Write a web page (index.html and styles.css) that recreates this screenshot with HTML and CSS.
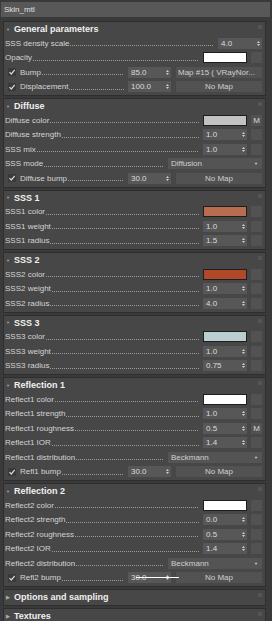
FILE: index.html
```html
<!DOCTYPE html>
<html lang="en">
<head>
    <meta charset="UTF-8">
    <title>Skin_mtl</title>
    <link rel="stylesheet" href="styles.css">
</head>
<body>
    <div class="name-bar">Skin_mtl</div>

    <section class="rollout">
        <div class="head"><span class="arrow">&#9660;</span>General parameters<span class="grip"></span></div>
        <div class="row">
            <span class="label">SSS density scale</span><span class="dots"></span>
            <span class="spin"><span>4.0</span><span class="updn"></span></span>
        </div>
        <div class="row">
            <span class="label">Opacity</span><span class="dots"></span>
            <span class="swatch" style="background:#ffffff"></span><span class="sq"></span>
        </div>
        <div class="row">
            <span class="check"></span><span class="label">Bump</span><span class="dots"></span>
            <span class="spin short"><span>85.0</span><span class="updn"></span></span>
            <span class="mapbtn left">Map #15 ( VRayNor...</span>
        </div>
        <div class="row">
            <span class="check"></span><span class="label">Displacement</span><span class="dots"></span>
            <span class="spin short"><span>100.0</span><span class="updn"></span></span>
            <span class="mapbtn">No Map</span>
        </div>
    </section>

    <section class="rollout">
        <div class="head"><span class="arrow">&#9660;</span>Diffuse<span class="grip"></span></div>
        <div class="row">
            <span class="label">Diffuse color</span><span class="dots"></span>
            <span class="swatch" style="background:#c2c2c2"></span><span class="sq">M</span>
        </div>
        <div class="row">
            <span class="label">Diffuse strength</span><span class="dots"></span>
            <span class="spin"><span>1.0</span><span class="updn"></span></span><span class="sq"></span>
        </div>
        <div class="row">
            <span class="label">SSS mix</span><span class="dots"></span>
            <span class="spin"><span>1.0</span><span class="updn"></span></span><span class="sq"></span>
        </div>
        <div class="row">
            <span class="label">SSS mode</span><span class="dots"></span>
            <span class="combo"><span>Diffusion</span><span class="drop">&#9660;</span></span>
        </div>
        <div class="row">
            <span class="check"></span><span class="label">Diffuse bump</span><span class="dots"></span>
            <span class="spin short"><span>30.0</span><span class="updn"></span></span>
            <span class="mapbtn">No Map</span>
        </div>
    </section>

    <section class="rollout">
        <div class="head"><span class="arrow">&#9660;</span>SSS 1<span class="grip"></span></div>
        <div class="row">
            <span class="label">SSS1 color</span><span class="dots"></span>
            <span class="swatch" style="background:#b86c50"></span><span class="sq"></span>
        </div>
        <div class="row">
            <span class="label">SSS1 weight</span><span class="dots"></span>
            <span class="spin"><span>1.0</span><span class="updn"></span></span><span class="sq"></span>
        </div>
        <div class="row">
            <span class="label">SSS1 radius</span><span class="dots"></span>
            <span class="spin"><span>1.5</span><span class="updn"></span></span><span class="sq"></span>
        </div>
    </section>

    <section class="rollout">
        <div class="head"><span class="arrow">&#9660;</span>SSS 2<span class="grip"></span></div>
        <div class="row">
            <span class="label">SSS2 color</span><span class="dots"></span>
            <span class="swatch" style="background:#b0482a"></span><span class="sq"></span>
        </div>
        <div class="row">
            <span class="label">SSS2 weight</span><span class="dots"></span>
            <span class="spin"><span>1.0</span><span class="updn"></span></span><span class="sq"></span>
        </div>
        <div class="row">
            <span class="label">SSS2 radius</span><span class="dots"></span>
            <span class="spin"><span>4.0</span><span class="updn"></span></span><span class="sq"></span>
        </div>
    </section>

    <section class="rollout">
        <div class="head"><span class="arrow">&#9660;</span>SSS 3<span class="grip"></span></div>
        <div class="row">
            <span class="label">SSS3 color</span><span class="dots"></span>
            <span class="swatch" style="background:#bccfd0"></span><span class="sq"></span>
        </div>
        <div class="row">
            <span class="label">SSS3 weight</span><span class="dots"></span>
            <span class="spin"><span>1.0</span><span class="updn"></span></span><span class="sq"></span>
        </div>
        <div class="row">
            <span class="label">SSS3 radius</span><span class="dots"></span>
            <span class="spin"><span>0.75</span><span class="updn"></span></span><span class="sq"></span>
        </div>
    </section>

    <section class="rollout">
        <div class="head"><span class="arrow">&#9660;</span>Reflection 1<span class="grip"></span></div>
        <div class="row">
            <span class="label">Reflect1 color</span><span class="dots"></span>
            <span class="swatch" style="background:#ffffff"></span><span class="sq"></span>
        </div>
        <div class="row">
            <span class="label">Reflect1 strength</span><span class="dots"></span>
            <span class="spin"><span>1.0</span><span class="updn"></span></span><span class="sq"></span>
        </div>
        <div class="row">
            <span class="label">Reflect1 roughness</span><span class="dots"></span>
            <span class="spin"><span>0.5</span><span class="updn"></span></span><span class="sq">M</span>
        </div>
        <div class="row">
            <span class="label">Reflect1 IOR</span><span class="dots"></span>
            <span class="spin"><span>1.4</span><span class="updn"></span></span><span class="sq"></span>
        </div>
        <div class="row">
            <span class="label">Reflect1 distribution</span><span class="dots"></span>
            <span class="combo"><span>Beckmann</span><span class="drop">&#9660;</span></span>
        </div>
        <div class="row">
            <span class="check"></span><span class="label">Refl1 bump</span><span class="dots"></span>
            <span class="spin short"><span>30.0</span><span class="updn"></span></span>
            <span class="mapbtn">No Map</span>
        </div>
    </section>

    <section class="rollout">
        <div class="head"><span class="arrow">&#9660;</span>Reflection 2<span class="grip"></span></div>
        <div class="row">
            <span class="label">Reflect2 color</span><span class="dots"></span>
            <span class="swatch" style="background:#ffffff"></span><span class="sq"></span>
        </div>
        <div class="row">
            <span class="label">Reflect2 strength</span><span class="dots"></span>
            <span class="spin"><span>0.0</span><span class="updn"></span></span><span class="sq"></span>
        </div>
        <div class="row">
            <span class="label">Reflect2 roughness</span><span class="dots"></span>
            <span class="spin"><span>0.5</span><span class="updn"></span></span><span class="sq"></span>
        </div>
        <div class="row">
            <span class="label">Reflect2 IOR</span><span class="dots"></span>
            <span class="spin"><span>1.4</span><span class="updn"></span></span><span class="sq"></span>
        </div>
        <div class="row">
            <span class="label">Reflect2 distribution</span><span class="dots"></span>
            <span class="combo"><span>Beckmann</span><span class="drop">&#9660;</span></span>
        </div>
        <div class="row">
            <span class="check"></span><span class="label">Refl2 bump</span><span class="dots"></span>
            <span class="spin short"><span>30.0</span><span class="updn"></span><span class="scratch"></span></span>
            <span class="mapbtn">No Map</span>
        </div>
    </section>

    <section class="rollout">
        <div class="head"><span class="arrow closed">&#9654;</span>Options and sampling<span class="grip"></span></div>
    </section>

    <section class="rollout">
        <div class="head"><span class="arrow closed">&#9654;</span>Textures<span class="grip"></span></div>
    </section>
</body>
</html>
```

FILE: styles.css
```css
body {
    margin: 0;
    width: 272px;
    height: 621px;
    overflow: hidden;
    background-color: #3a3a3a;
    font-family: "Liberation Sans", Arial, sans-serif;
    font-size: 8px;
    color: #d4d4d4;
}
.name-bar {
    height: 15px;
    line-height: 15px;
    margin: 2px 2px 4px 1px;
    padding-left: 3px;
    background-color: #585858;
    color: #e0e0e0;
}
.rollout {
    box-sizing: border-box;
    width: 263px;
    margin: 0 0 2px 3px;
    padding: 0 3px 1px 1px;
    background-color: #474747;
    border: 1px solid #2e2e2e;
}
.head {
    display: flex;
    align-items: center;
    height: 14px;
    font-size: 9px;
    font-weight: bold;
    color: #f0f0f0;
}
.arrow {
    width: 9px;
    font-size: 4px;
    color: #a8a8a8;
    padding-left: 1px;
    box-sizing: border-box;
}
.arrow.closed {
    font-size: 5px;
}
.grip {
    margin-left: auto;
    align-self: flex-start;
    margin-top: 3px;
    width: 4px;
    height: 4px;
    background-color: #555;
}
.row {
    display: flex;
    align-items: center;
    height: 14.5px;
    white-space: nowrap;
}
.dots {
    flex: 1;
    height: 1px;
    margin: 5px 4px 0 1px;
    background: repeating-linear-gradient(to right, #9c9c9c 0 1px, transparent 1px 2px);
}
.check {
    width: 8px;
    height: 8px;
    margin: 0 4px 0 3px;
    background: #3a3a3a url("data:image/svg+xml,%3Csvg xmlns='http://www.w3.org/2000/svg' width='8' height='8'%3E%3Cpath d='M1.5 4.2 L3.3 6 L6.7 1.8' fill='none' stroke='%23d8d8d8' stroke-width='1.2'/%3E%3C/svg%3E") no-repeat;
}
.spin {
    position: relative;
    box-sizing: border-box;
    width: 44px;
    height: 11px;
    display: flex;
    align-items: center;
    justify-content: space-between;
    padding: 0 2px 0 3px;
    background-color: #575757;
    color: #dcdcdc;
}
.spin.short {
    width: 43px;
    margin-right: 5px;
}
.updn {
    width: 3px;
    height: 7px;
    background: url("data:image/svg+xml,%3Csvg xmlns='http://www.w3.org/2000/svg' width='3' height='7'%3E%3Cpath d='M0 3 L1.5 1 L3 3 Z M0 4 L1.5 6 L3 4 Z' fill='%23cfcfcf'/%3E%3C/svg%3E") no-repeat;
}
.swatch {
    box-sizing: border-box;
    width: 44px;
    height: 11px;
    border: 1px solid #1e1e1e;
}
.sq {
    box-sizing: border-box;
    width: 11px;
    height: 11px;
    margin-left: 4px;
    background-color: #525252;
    color: #d8d8d8;
    text-align: center;
    line-height: 11px;
}
.combo {
    box-sizing: border-box;
    width: 94px;
    height: 11px;
    display: flex;
    align-items: center;
    justify-content: space-between;
    padding: 0 4px 0 3px;
    background-color: #545454;
    color: #d0d0d0;
}
.drop {
    font-size: 4px;
    color: #d0d0d0;
}
.mapbtn {
    box-sizing: border-box;
    width: 86px;
    height: 11px;
    line-height: 11px;
    text-align: center;
    background-color: #525252;
    color: #d0d0d0;
    overflow: hidden;
}
.mapbtn.left {
    text-align: left;
    padding-left: 2px;
}
.scratch {
    position: absolute;
    left: 8px;
    top: 5px;
    width: 43px;
    height: 1px;
    background-color: #ffffff;
}
```
